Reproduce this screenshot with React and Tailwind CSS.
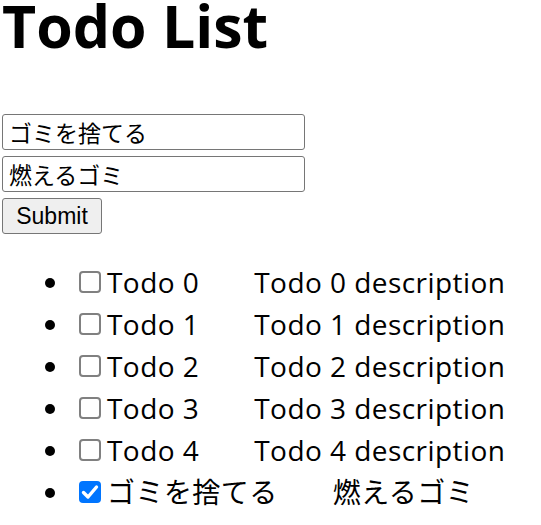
import { useState } from 'react';

const initialTodos = [
  { title: 'Todo 0', description: 'Todo 0 description', done: false },
  { title: 'Todo 1', description: 'Todo 1 description', done: false },
  { title: 'Todo 2', description: 'Todo 2 description', done: false },
  { title: 'Todo 3', description: 'Todo 3 description', done: false },
  { title: 'Todo 4', description: 'Todo 4 description', done: false },
  { title: 'ゴミを捨てる', description: '燃えるゴミ', done: true },
];

function Check({ checked, onClick }) {
  if (checked) {
    return (
      <span
        onClick={onClick}
        className="inline-flex items-center justify-center w-[22px] h-[22px] ml-[7px] mr-[6px] rounded-[4px] bg-[#0075ff] align-baseline cursor-pointer"
      >
        <svg width="22" height="22" viewBox="0 0 22 22" fill="none">
          <path d="M4.5 11.5 L9 16 L17.5 6" stroke="white" strokeWidth="3.4" strokeLinecap="round" strokeLinejoin="round" />
        </svg>
      </span>
    );
  }
  return (
    <span
      onClick={onClick}
      className="inline-block w-[22px] h-[22px] ml-[7px] mr-[6px] rounded-[4px] border-2 border-[#808080] bg-white align-baseline cursor-pointer"
    />
  );
}

export default function App() {
  const [todos, setTodos] = useState(initialTodos);
  const [title, setTitle] = useState('ゴミを捨てる');
  const [description, setDescription] = useState('燃えるゴミ');

  const toggle = (i) => {
    setTodos(todos.map((t, j) => (j === i ? { ...t, done: !t.done } : t)));
  };

  const handleSubmit = (e) => {
    e.preventDefault();
    setTodos([...todos, { title, description, done: false }]);
  };

  return (
    <div className="pl-[2px] text-black font-['Open_Sans','Noto_Sans_CJK_JP',sans-serif]">
      <h1 className="text-[59px] font-bold leading-[56px] -mt-[3px] mb-[61px]">Todo List</h1>

      <form onSubmit={handleSubmit} className="flex flex-col items-start">
        <input
          value={title}
          onChange={(e) => setTitle(e.target.value)}
          className="w-[303px] h-[36px] px-[6px] border border-[#767676] rounded-[3px] text-[23px] leading-[30px] outline-none font-['Noto_Sans_CJK_JP',sans-serif]"
        />
        <input
          value={description}
          onChange={(e) => setDescription(e.target.value)}
          className="w-[303px] h-[36px] mt-[6px] px-[6px] border border-[#767676] rounded-[3px] text-[23px] leading-[30px] outline-none font-['Noto_Sans_CJK_JP',sans-serif]"
        />
        <button
          type="submit"
          className="w-[100px] h-[36px] mt-[6px] bg-[#efefef] border border-[#767676] rounded-[3px] text-[23px] leading-none font-['Liberation_Sans',sans-serif]"
        >
          Submit
        </button>
      </form>

      <ul className="list-disc pl-[70px] mt-[27px] text-[28px] leading-[42px] tracking-[0.45px]">
        {todos.map((t, i) => (
          <li key={i} className="whitespace-nowrap">
            <Check checked={t.done} onClick={() => toggle(i)} />
            {t.title}
            <span className="ml-[55px]">{t.description}</span>
          </li>
        ))}
      </ul>
    </div>
  );
}
